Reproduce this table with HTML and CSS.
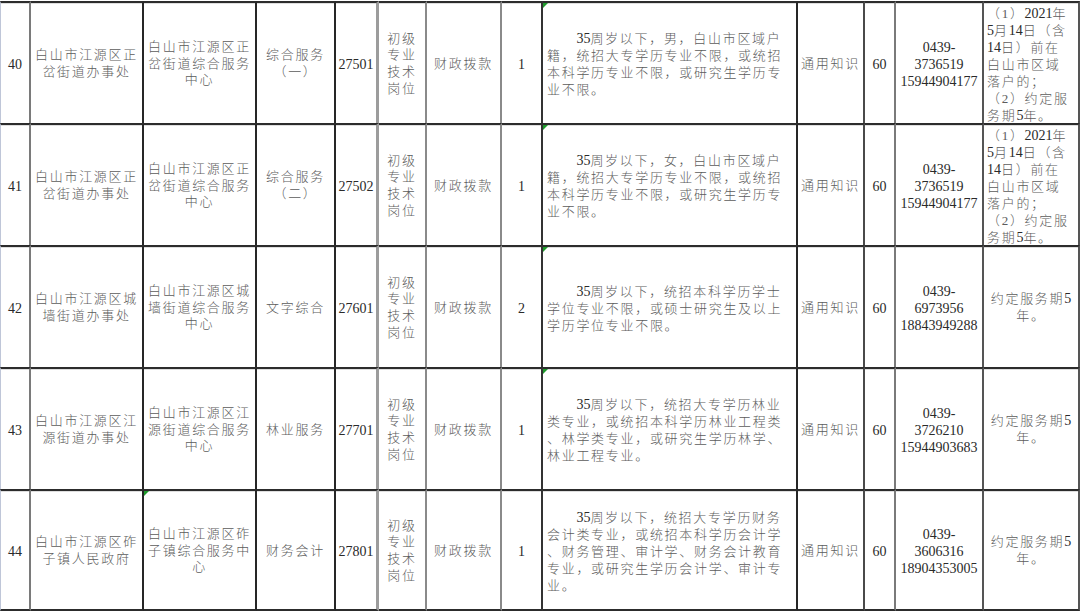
FILE: index.html
```html
<!DOCTYPE html>
<html lang="zh-CN">
<head>
<meta charset="utf-8">
<title>岗位表</title>
<link rel="stylesheet" href="styles.css">
</head>
<body>
<div class="sheet">
  <!-- row 40 -->
  <div class="cell c1 num"><p>40</p></div>
  <div class="cell c2"><p>白山市江源区正<br>岔街道办事处</p></div>
  <div class="cell c3"><p>白山市江源区正<br>岔街道综合服务<br>中心</p></div>
  <div class="cell c4"><p>综合服务<br>（一）</p></div>
  <div class="cell c5 num"><p>27501</p></div>
  <div class="cell c6"><p>初级<br>专业<br>技术<br>岗位</p></div>
  <div class="cell c7"><p>财政拨款</p></div>
  <div class="cell c8 num"><p>1</p></div>
  <div class="cell c9 desc flag"><p>　　<span class="n">35</span>周岁以下，男，白山市区域户<br>籍，统招大专学历专业不限，或统招<br>本科学历专业不限，或研究生学历专<br>业不限。</p></div>
  <div class="cell c10"><p>通用知识</p></div>
  <div class="cell c11 num"><p>60</p></div>
  <div class="cell c12 num"><p>0439-<br>3736519<br>15944904177</p></div>
  <div class="cell c13 left"><p>（1）<span class="n">2021</span>年<br><span class="n">5</span>月<span class="n">14</span>日（含<br><span class="n">14</span>日）前在<br>白山市区域<br>落户的；<br>（2）约定服<br>务期<span class="n">5</span>年。</p></div>

  <!-- row 41 -->
  <div class="cell c1 num"><p>41</p></div>
  <div class="cell c2"><p>白山市江源区正<br>岔街道办事处</p></div>
  <div class="cell c3"><p>白山市江源区正<br>岔街道综合服务<br>中心</p></div>
  <div class="cell c4"><p>综合服务<br>（二）</p></div>
  <div class="cell c5 num"><p>27502</p></div>
  <div class="cell c6"><p>初级<br>专业<br>技术<br>岗位</p></div>
  <div class="cell c7"><p>财政拨款</p></div>
  <div class="cell c8 num"><p>1</p></div>
  <div class="cell c9 desc flag"><p>　　<span class="n">35</span>周岁以下，女，白山市区域户<br>籍，统招大专学历专业不限，或统招<br>本科学历专业不限，或研究生学历专<br>业不限。</p></div>
  <div class="cell c10"><p>通用知识</p></div>
  <div class="cell c11 num"><p>60</p></div>
  <div class="cell c12 num"><p>0439-<br>3736519<br>15944904177</p></div>
  <div class="cell c13 left"><p>（1）<span class="n">2021</span>年<br><span class="n">5</span>月<span class="n">14</span>日（含<br><span class="n">14</span>日）前在<br>白山市区域<br>落户的；<br>（2）约定服<br>务期<span class="n">5</span>年。</p></div>

  <!-- row 42 -->
  <div class="cell c1 num"><p>42</p></div>
  <div class="cell c2"><p>白山市江源区城<br>墙街道办事处</p></div>
  <div class="cell c3"><p>白山市江源区城<br>墙街道综合服务<br>中心</p></div>
  <div class="cell c4"><p>文字综合</p></div>
  <div class="cell c5 num"><p>27601</p></div>
  <div class="cell c6"><p>初级<br>专业<br>技术<br>岗位</p></div>
  <div class="cell c7"><p>财政拨款</p></div>
  <div class="cell c8 num"><p>2</p></div>
  <div class="cell c9 desc flag"><p>　　<span class="n">35</span>周岁以下，统招本科学历学士<br>学位专业不限，或硕士研究生及以上<br>学历学位专业不限。</p></div>
  <div class="cell c10"><p>通用知识</p></div>
  <div class="cell c11 num"><p>60</p></div>
  <div class="cell c12 num"><p>0439-<br>6973956<br>18843949288</p></div>
  <div class="cell c13"><p>约定服务期<span class="n">5</span><br>年。</p></div>

  <!-- row 43 -->
  <div class="cell c1 num"><p>43</p></div>
  <div class="cell c2"><p>白山市江源区江<br>源街道办事处</p></div>
  <div class="cell c3"><p>白山市江源区江<br>源街道综合服务<br>中心</p></div>
  <div class="cell c4"><p>林业服务</p></div>
  <div class="cell c5 num"><p>27701</p></div>
  <div class="cell c6"><p>初级<br>专业<br>技术<br>岗位</p></div>
  <div class="cell c7"><p>财政拨款</p></div>
  <div class="cell c8 num"><p>1</p></div>
  <div class="cell c9 desc flag"><p>　　<span class="n">35</span>周岁以下，统招大专学历林业<br>类专业，或统招本科学历林业工程类<br>、林学类专业，或研究生学历林学、<br>林业工程专业。</p></div>
  <div class="cell c10"><p>通用知识</p></div>
  <div class="cell c11 num"><p>60</p></div>
  <div class="cell c12 num"><p>0439-<br>3726210<br>15944903683</p></div>
  <div class="cell c13"><p>约定服务期<span class="n">5</span><br>年。</p></div>

  <!-- row 44 -->
  <div class="cell c1 num"><p>44</p></div>
  <div class="cell c2"><p>白山市江源区砟<br>子镇人民政府</p></div>
  <div class="cell c3 flag"><p>白山市江源区砟<br>子镇综合服务中<br>心</p></div>
  <div class="cell c4"><p>财务会计</p></div>
  <div class="cell c5 num"><p>27801</p></div>
  <div class="cell c6"><p>初级<br>专业<br>技术<br>岗位</p></div>
  <div class="cell c7"><p>财政拨款</p></div>
  <div class="cell c8 num"><p>1</p></div>
  <div class="cell c9 desc"><p>　　<span class="n">35</span>周岁以下，统招大专学历财务<br>会计类专业，或统招本科学历会计学<br>、财务管理、审计学、财务会计教育<br>专业，或研究生学历会计学、审计专<br>业。</p></div>
  <div class="cell c10"><p>通用知识</p></div>
  <div class="cell c11 num"><p>60</p></div>
  <div class="cell c12 num"><p>0439-<br>3606316<br>18904353005</p></div>
  <div class="cell c13"><p>约定服务期<span class="n">5</span><br>年。</p></div>
</div>
</body>
</html>
```

FILE: styles.css
```css
html, body {
  margin: 0;
  padding: 0;
  background: #ffffff;
}

body {
  width: 1080px;
  height: 612px;
  overflow: hidden;
}

.sheet {
  display: grid;
  grid-template-columns: 31px 113px 113px 79px 43px 48px 75px 41px 255px 67px 31px 88px 96px;
  grid-auto-rows: 122px;
  padding-top: 1px;
  width: 1080px;
  font-family: "Liberation Serif", "Noto Sans CJK SC", serif;
}

.cell {
  position: relative;
  box-sizing: border-box;
  display: flex;
  align-items: center;
  justify-content: center;
  text-align: center;
  white-space: nowrap;
  border-top: 2px solid #2c2c2c;
  border-right: 2px solid #2c2c2c;
  box-shadow: inset 0 1px 0 #dedede;
  padding: 2px 2px 0;
  font-size: 13px;
  line-height: 16.6px;
  letter-spacing: 1.7px;
  color: #5c5c5c;
  font-weight: 300;
  overflow: hidden;
}

.cell p {
  margin: 0;
}

.sheet > .cell:nth-last-child(-n+13) {
  border-bottom: 2px solid #2c2c2c;
}

.num {
  font-size: 14px;
  letter-spacing: 0;
  color: #2a2a2a;
  font-weight: 400;
  line-height: 17px;
}

.n {
  letter-spacing: 0;
  font-size: 14px;
  font-weight: 400;
  color: #2a2a2a;
}

.c1 { border-right-color: #7a7a7a; border-left: 1px solid #bfc6d8; }
.c2 { border-right-color: #262626; }
.c3 { border-right-color: #262626; }
.c4 { border-right-color: #262626; }
.c5 { border-right: 3px solid #9c9c9c; }
.c6 { border-right-color: #8a8a8a; }
.c7 { border-right-color: #8a8a8a; }
.c8 { border-right-color: #333333; }
.c9 { border-right-color: #262626; }
.c10 { border-right-color: #4a4a4a; }
.c11 { border-right-color: #7a7a7a; }
.c12 { border-right-color: #555555; }
.c13 { border-right-color: #555555; }

.desc {
  justify-content: flex-start;
  text-align: left;
  padding-left: 4px;
  line-height: 17px;
}

.left {
  justify-content: flex-start;
  text-align: left;
  padding-left: 3px;
  line-height: 17px;
}

.flag::before {
  content: "";
  position: absolute;
  left: 0;
  top: 0;
  width: 0;
  height: 0;
  border-top: 5px solid #1f9a2c;
  border-right: 5px solid transparent;
}
```
